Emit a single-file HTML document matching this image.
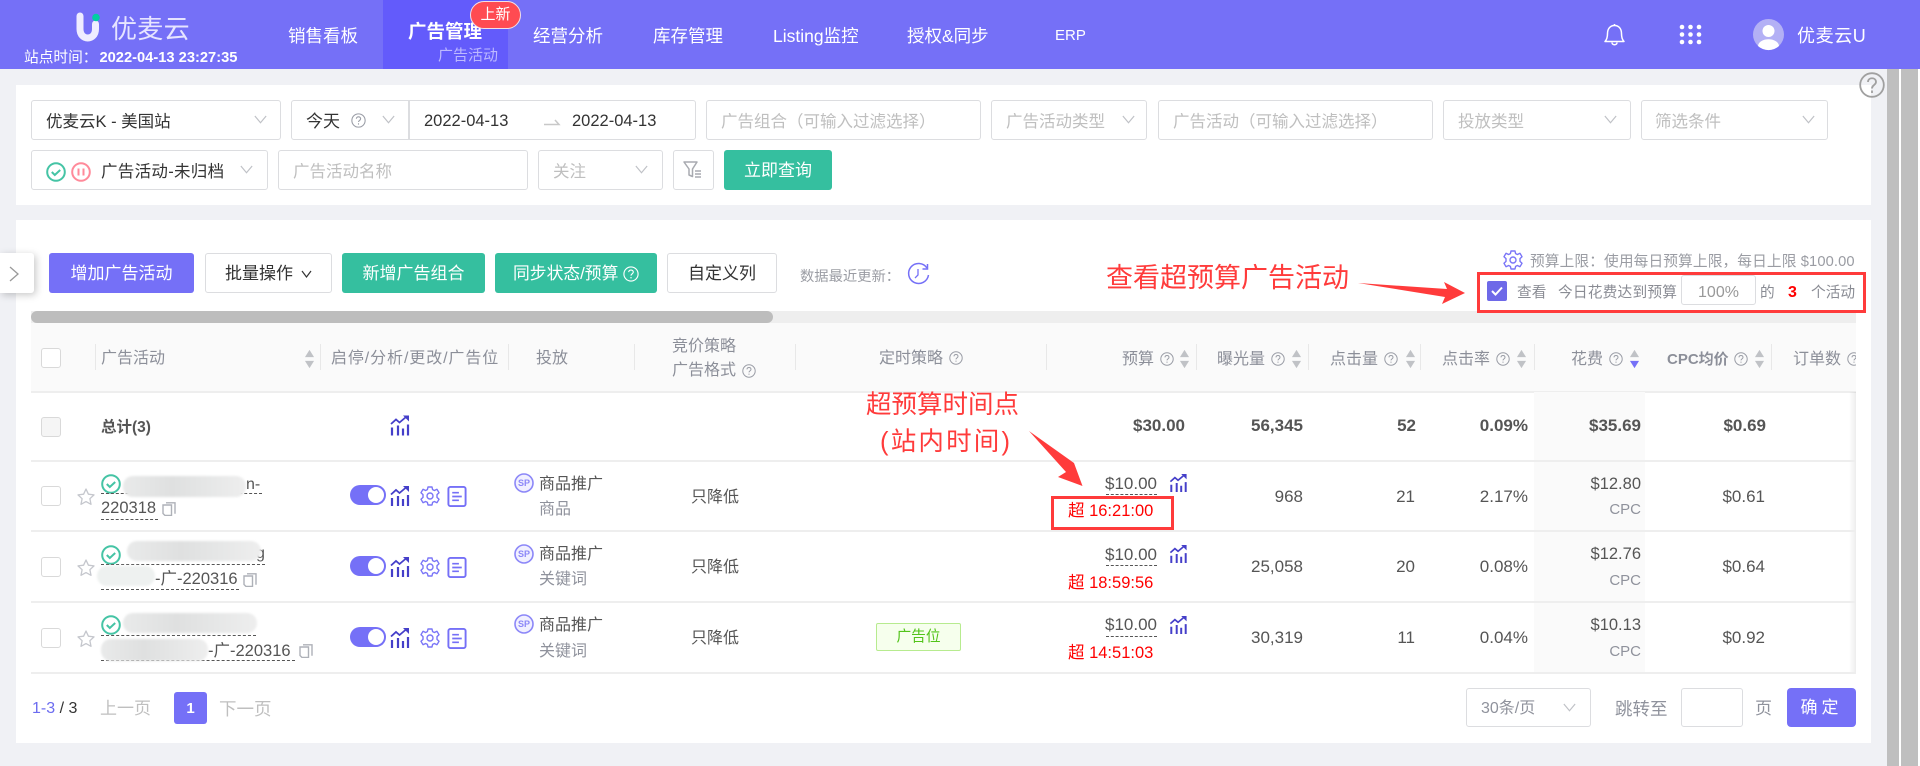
<!DOCTYPE html>
<html lang="zh-CN"><head><meta charset="utf-8"><title>优麦云 广告活动</title>
<style>
*{box-sizing:border-box}
html,body{margin:0;padding:0;width:1920px;height:766px;overflow:hidden;background:#f0f1f5}
body{position:relative;font-family:"Liberation Sans","Noto Sans CJK SC",sans-serif;font-size:17px;color:#333}
.a{position:absolute}
.t{position:absolute;white-space:nowrap;height:24px;line-height:24px}
.t:not(.r){margin-top:1px}
.t.g{margin-top:1px}
.r{text-align:right}
.g{color:#8f929c}
.ph{color:#bfbfbf}
.box{position:absolute;background:#fff;border:1.5px solid #dcdde0;border-radius:3px}
.btn{position:absolute;top:253px;height:40px;line-height:40px;text-align:center;border-radius:3px;font-size:17px}
.p{background:#7570f7;color:#fff}
.gr{background:#35bf9f;color:#fff}
.w{background:#fff;border:1.5px solid #dcdde0;color:#333}
.s{font-size:14.7px}
.hd{font-size:16px;color:#8c8f99}
.b{font-weight:700;color:#555}
.red{color:#f00}
.ln{position:absolute;left:31px;width:1825px;height:1.5px;background:#eeeeee}
.dv{position:absolute;top:344px;height:26px;width:1px;background:#e8e8e8}
.cb{position:absolute;left:41px;width:20px;height:20px;border:1.5px solid #d9d9d9;border-radius:3px;background:#fff}
.dash{position:absolute;border-top:1.5px dashed #555;height:0}
.blob{position:absolute;background:linear-gradient(90deg,#e9eaea,#dfe0e0 40%,#e6e7e7 70%,#eeeeee);border-radius:10px;filter:blur(1px)}
svg{position:absolute;overflow:visible}
</style></head><body>
<svg width="0" height="0" style="position:absolute">
<defs>
<symbol id="chart" viewBox="0 0 20 20"><g fill="none" stroke="#453fc9" stroke-width="1.8"><path d="M1 8.5 6 4l3.5 3L16 1.5"/></g><path d="M13 0h6v6z" fill="#453fc9"/><path d="M2 12v8M8 10v10M13 13v7M18 9v11" stroke="#453fc9" stroke-width="2.2" fill="none"/></symbol>
<symbol id="gear" viewBox="0 0 20 20"><path d="M8 1h4l.6 2.6 1.8.9L17 3.3l2 3.4-2 1.9v2.8l2 1.9-2 3.4-2.6-1.2-1.8.9L12 19H8l-.6-2.6-1.8-.9L3 16.7l-2-3.4 2-1.9V8.6L1 6.7l2-3.4 2.6 1.2 1.8-.9z" fill="none" stroke="#7a75f7" stroke-width="1.4" stroke-linejoin="round"/><circle cx="10" cy="10" r="3" fill="none" stroke="#7a75f7" stroke-width="1.4"/></symbol>
<symbol id="doc" viewBox="0 0 20 22"><rect x="1" y="1" width="18" height="20" rx="2" fill="none" stroke="#7570f7" stroke-width="2"/><path d="M5 7h7M5 11h10M5 15h7" stroke="#7570f7" stroke-width="1.8"/></symbol>
<symbol id="copy" viewBox="0 0 14 14"><path d="M4 .8h9v11" fill="none" stroke="#aeb1b8" stroke-width="1.4"/><path d="M1 3h8.5v10.5H3L1 11.5z" fill="#fff" stroke="#aeb1b8" stroke-width="1.4"/></symbol>
<symbol id="star" viewBox="0 0 18 17"><path d="M9 1l2.4 5.2 5.6.7-4.1 3.8 1.1 5.6L9 13.6l-5 2.7 1.1-5.6L1 6.9l5.6-.7z" fill="none" stroke="#c5c7cd" stroke-width="1.3" stroke-linejoin="round"/></symbol>
<symbol id="ok" viewBox="0 0 20 20"><circle cx="10" cy="10" r="8.8" fill="none" stroke="#45c4a5" stroke-width="2"/><path d="M5.8 10l3 3 5.4-5" fill="none" stroke="#45c4a5" stroke-width="2"/></symbol>
<symbol id="q" viewBox="0 0 14 14"><circle cx="7" cy="7" r="6.2" fill="none" stroke="#9a9da6" stroke-width="1"/><path d="M5 5.4c0-2.5 4-2.5 4 0 0 1.5-2 1.5-2 3M7 9.6v1.2" fill="none" stroke="#9a9da6" stroke-width="1"/></symbol>
<symbol id="chev" viewBox="0 0 12 8"><path d="M.8.8 6 7 11.2.8" fill="none" stroke="#bfc1c6" stroke-width="1.1"/></symbol>
<symbol id="sort" viewBox="0 0 11 22"><path d="M5.5 1 10.5 9H.5z" fill="#c0c2c6"/><path d="M5.5 21 .5 13h10z" fill="#c0c2c6"/></symbol>
<symbol id="sortd" viewBox="0 0 11 22"><path d="M5.5 1 10.5 9H.5z" fill="#c0c2c6"/><path d="M5.5 21 .5 13h10z" fill="#7570f7"/></symbol>
<symbol id="sp" viewBox="0 0 20 20"><circle cx="10" cy="10" r="9" fill="#f1f0ff" stroke="#8c87f8" stroke-width="1.6"/><text x="10" y="13" text-anchor="middle" font-size="9" font-weight="700" fill="#8c87f8" font-family="Liberation Sans">SP</text></symbol>
<symbol id="tg" viewBox="0 0 36 20"><rect width="36" height="20" rx="10" fill="#7570f7"/><circle cx="26" cy="10" r="8" fill="#fff"/></symbol>
</defs></svg>

<!-- header -->
<div class="a" style="left:0;top:0;width:1920px;height:69px;background:#7570f7"></div>
<div class="a" style="left:383px;top:0;width:125px;height:69px;background:#635bfb"></div>
<svg style="left:76px;top:14px" width="24" height="28" viewBox="0 0 24 28"><path d="M4 2v13c0 12 15.500 12 15.500 0V10" fill="none" stroke="#efedff" stroke-width="7" stroke-linecap="round"/><circle cx="20" cy="3.500" r="3.800" fill="#00cfa2"/></svg>
<div class="t" style="left:111px;top:16px;font-size:26px;color:#e6e4ff;line-height:24px;letter-spacing:.3px">优麦云</div>
<div class="t" style="left:24px;top:45px;font-size:14.7px;color:#fff">站点时间：<span style="font-weight:700;font-size:14.7px;margin-left:2px">2022-04-13 23:27:35</span></div>
<div class="t" style="left:288px;top:23px;color:#fff;font-size:17.5px">销售看板</div>
<div class="t" style="left:408px;top:19px;color:#fff;font-size:18.500px;font-weight:700">广告管理</div>
<div class="t" style="left:438px;top:43px;color:#bdb9ff;font-size:15px">广告活动</div>
<div class="a" style="left:470px;top:1px;width:51px;height:28px;border-radius:14px;background:#ff4b52;border:1px solid #f3dfe6;color:#fff;font-size:15px;line-height:25px;text-align:center">上新</div>
<div class="t" style="left:533px;top:23px;color:#fff;font-size:17.5px">经营分析</div>
<div class="t" style="left:653px;top:23px;color:#fff;font-size:17.5px">库存管理</div>
<div class="t" style="left:773px;top:23px;color:#fff;font-size:17.5px">Listing监控</div>
<div class="t" style="left:907px;top:23px;color:#fff;font-size:17.5px">授权&amp;同步</div>
<div class="t" style="left:1055px;top:23px;color:#fff;font-size:15px">ERP</div>
<svg style="left:1603px;top:23px" width="23" height="23" viewBox="0 0 23 23"><path d="M2 18.500c2-2 2.500-4 2.500-8C4.500 6 7 2.500 11.500 2.500S18.500 6 18.500 10.500c0 4 .5 6 2.500 8z" fill="none" stroke="#fff" stroke-width="1.500" stroke-linejoin="round"/><path d="M9 19.500c0 3 5 3 5 0M11.500 1v1.500" fill="none" stroke="#fff" stroke-width="1.500"/></svg>
<svg style="left:1679px;top:24px" width="23" height="21" fill="#fff"><circle cx="3" cy="3" r="2.300"/><circle cx="11.500" cy="3" r="2.300"/><circle cx="20" cy="3" r="2.300"/><circle cx="3" cy="10.500" r="2.300"/><circle cx="11.500" cy="10.500" r="2.300"/><circle cx="20" cy="10.500" r="2.300"/><circle cx="3" cy="18" r="2.300"/><circle cx="11.500" cy="18" r="2.300"/><circle cx="20" cy="18" r="2.300"/></svg>
<svg style="left:1753px;top:19px" width="31" height="31"><circle cx="15.500" cy="15.500" r="15.500" fill="#b3b0f5"/><circle cx="15.500" cy="12" r="6" fill="#fff"/><path d="M5 27c1-9 20-9 21 0a15.500 15.500 0 0 1-21 0z" fill="#fff"/></svg>
<div class="t" style="left:1797px;top:23px;color:#fff;font-size:18px;letter-spacing:.6px">优麦云U</div>

<!-- page scrollbars -->
<div class="a" style="left:1887px;top:69px;width:33px;height:697px;background:#fff"></div>
<div class="a" style="left:1887px;top:69px;width:12px;height:697px;background:#bfbfbf"></div>
<div class="a" style="left:1901px;top:69px;width:17px;height:697px;background:#bfbfbf"></div>

<!-- filter card -->
<div class="a" style="left:16px;top:85px;width:1855px;height:120px;background:#fff"></div>
<svg style="left:1859px;top:72px" width="26" height="26" viewBox="0 0 26 26"><circle cx="13" cy="13" r="11.800" fill="none" stroke="#a0a0a0" stroke-width="1.800"/><path d="M9 10c0-5 8-5 8 0 0 3-4 3-4 6.500M13 18.500v2.500" fill="none" stroke="#a0a0a0" stroke-width="1.800"/></svg>

<div class="box" style="left:31px;top:100px;width:250px;height:40px"></div>
<div class="t" style="left:46px;top:109px;font-size:16.500px">优麦云K - 美国站</div>
<svg style="left:254px;top:115px" width="13" height="9"><use href="#chev"/></svg>
<div class="box" style="left:291px;top:100px;width:405px;height:40px"></div>
<div class="a" style="left:408px;top:100px;width:1.500px;height:40px;background:#dcdde0"></div>
<div class="t" style="left:306px;top:109px;font-size:17px">今天</div>
<svg style="left:351px;top:113px" width="15" height="15"><use href="#q"/></svg>
<svg style="left:382px;top:115px" width="13" height="9"><use href="#chev"/></svg>
<div class="t" style="left:424px;top:108px;font-size:16.500px">2022-04-13</div>
<div class="t" style="left:572px;top:108px;font-size:16.500px">2022-04-13</div>
<svg style="left:544px;top:118px" width="16" height="8"><path d="M0 6.500h15L11 2" fill="none" stroke="#c8c8c8" stroke-width="1.500"/></svg>
<div class="box" style="left:706px;top:100px;width:275px;height:40px"></div>
<div class="t ph" style="left:721px;top:109px;font-size:16.500px">广告组合（可输入过滤选择）</div>
<div class="box" style="left:991px;top:100px;width:156px;height:40px"></div>
<div class="t ph" style="left:1006px;top:109px;font-size:16.500px">广告活动类型</div>
<svg style="left:1122px;top:115px" width="13" height="9"><use href="#chev"/></svg>
<div class="box" style="left:1158px;top:100px;width:275px;height:40px"></div>
<div class="t ph" style="left:1173px;top:109px;font-size:16.500px">广告活动（可输入过滤选择）</div>
<div class="box" style="left:1443px;top:100px;width:188px;height:40px"></div>
<div class="t ph" style="left:1458px;top:109px;font-size:16.500px">投放类型</div>
<svg style="left:1604px;top:115px" width="13" height="9"><use href="#chev"/></svg>
<div class="box" style="left:1641px;top:100px;width:187px;height:40px"></div>
<div class="t ph" style="left:1655px;top:109px;font-size:16.500px">筛选条件</div>
<svg style="left:1802px;top:115px" width="13" height="9"><use href="#chev"/></svg>

<div class="box" style="left:31px;top:150px;width:237px;height:40px"></div>
<svg style="left:46px;top:162px" width="20" height="20"><use href="#ok"/></svg>
<svg style="left:71px;top:162px" width="20" height="20" viewBox="0 0 20 20"><circle cx="10" cy="10" r="8.800" fill="none" stroke="#ff8a9a" stroke-width="2"/><path d="M7.500 6.500v7M12.500 6.500v7" stroke="#ff8a9a" stroke-width="2"/></svg>
<div class="t" style="left:101px;top:159px;font-size:16.500px;letter-spacing:.3px">广告活动-未归档</div>
<svg style="left:240px;top:165px" width="13" height="9"><use href="#chev"/></svg>
<div class="box" style="left:278px;top:150px;width:250px;height:40px"></div>
<div class="t ph" style="left:293px;top:159px;font-size:16.500px">广告活动名称</div>
<div class="box" style="left:538px;top:150px;width:125px;height:40px"></div>
<div class="t ph" style="left:553px;top:159px;font-size:16.500px">关注</div>
<svg style="left:635px;top:165px" width="13" height="9"><use href="#chev"/></svg>
<div class="box" style="left:673px;top:150px;width:41px;height:40px"></div>
<svg style="left:683px;top:161px" width="21" height="18" viewBox="0 0 21 18"><path d="M1 1h13L9.500 8v7.500L6 14V8z" fill="none" stroke="#a8aab0" stroke-width="1.500" stroke-linejoin="round"/><path d="M12 10h6M12 13h6M12 16h6" stroke="#a8aab0" stroke-width="1.500"/></svg>
<div class="btn gr" style="left:724px;top:150px;width:108px;line-height:42px">立即查询</div>

<!-- table card -->
<div class="a" style="left:16px;top:220px;width:1855px;height:523px;background:#fff"></div>
<div class="a" style="left:0;top:253px;width:34px;height:40px;background:#fff;border-radius:0 3px 3px 0;box-shadow:2px 2px 8px rgba(0,0,0,.22)"></div>
<svg style="left:9px;top:266px" width="11" height="16"><path d="M1 1l8 7-8 7" fill="none" stroke="#999" stroke-width="1.300"/></svg>
<div class="btn p" style="left:49px;width:145px;line-height:42px">增加广告活动</div>
<div class="btn w" style="left:205px;width:127px;text-align:left;padding-left:19px">批量操作<svg style="left:95px;top:16px" width="11" height="8"><path d="M1 1l4.500 6L10 1" fill="none" stroke="#333" stroke-width="1.200"/></svg></div>
<div class="btn gr" style="left:342px;width:143px;line-height:42px">新增广告组合</div>
<div class="btn gr" style="left:495px;width:162px;line-height:42px;font-size:16.800px;text-align:left;padding-left:18px">同步状态/预算<svg style="left:128px;top:13px" width="16" height="16" viewBox="0 0 14 14"><circle cx="7" cy="7" r="6.200" fill="none" stroke="#fff" stroke-width="1"/><path d="M5 5.400c0-2.500 4-2.500 4 0 0 1.500-2 1.500-2 3M7 9.600v1.200" fill="none" stroke="#fff" stroke-width="1"/></svg></div>
<div class="btn w" style="left:667px;width:110px">自定义列</div>
<div class="t" style="left:800px;top:264px;font-size:14.300px;color:#9a9ca3">数据最近更新：</div>
<svg style="left:907px;top:263px" width="23" height="22" viewBox="0 0 23 22"><path d="M20 5A10 10 0 1 0 21.500 12" fill="none" stroke="#7570f7" stroke-width="1.500"/><path d="M20.500 1v5h-5" fill="none" stroke="#7570f7" stroke-width="1.500"/><path d="M11 6v6l-3 3" fill="none" stroke="#7570f7" stroke-width="1.300"/></svg>

<div class="a" style="left:31px;top:311px;width:1825px;height:12px;background:#eeeeee"></div>
<div class="a" style="left:31px;top:311px;width:742px;height:12px;background:#bdbdbd;border-radius:6px"></div>

<!-- table head -->
<div class="a" style="left:31px;top:323px;width:1825px;height:68px;background:#fafafa"></div>
<div class="ln" style="top:391px"></div>
<div class="a" style="left:1534px;top:392px;width:111px;height:280px;background:#fafafa"></div>
<div class="a" style="left:1849px;top:392px;width:7px;height:280px;background:linear-gradient(90deg,rgba(0,0,0,0),rgba(0,0,0,.07))"></div>
<div class="cb" style="top:348px"></div>
<div class="dv" style="left:95px"></div><div class="dv" style="left:320px"></div><div class="dv" style="left:508px"></div><div class="dv" style="left:634px"></div><div class="dv" style="left:795px"></div><div class="dv" style="left:1046px"></div><div class="dv" style="left:1196px"></div><div class="dv" style="left:1308px"></div><div class="dv" style="left:1420px"></div><div class="dv" style="left:1534px"></div><div class="dv" style="left:1771px"></div>
<div class="t hd" style="left:101px;top:346px">广告活动</div>
<svg style="left:304px;top:349px" width="11" height="20"><use href="#sort"/></svg>
<div class="t hd" style="left:331px;top:346px;font-size:16px;letter-spacing:.9px">启停/分析/更改/广告位</div>
<div class="t hd" style="left:536px;top:346px">投放</div>
<div class="t hd" style="left:672px;top:334px">竞价策略</div>
<div class="t hd" style="left:672px;top:358px">广告格式</div>
<svg style="left:742px;top:364px" width="14" height="14"><use href="#q"/></svg>
<div class="t hd" style="left:879px;top:346px">定时策略</div>
<svg style="left:949px;top:351px" width="14" height="14"><use href="#q"/></svg>
<div class="t hd" style="left:1122px;top:347px">预算</div><svg style="left:1160px;top:352px" width="14" height="14"><use href="#q"/></svg><svg style="left:1179px;top:349px" width="11" height="20"><use href="#sort"/></svg>
<div class="t hd" style="left:1217px;top:347px">曝光量</div><svg style="left:1271px;top:352px" width="14" height="14"><use href="#q"/></svg><svg style="left:1291px;top:349px" width="11" height="20"><use href="#sort"/></svg>
<div class="t hd" style="left:1330px;top:347px">点击量</div><svg style="left:1384px;top:352px" width="14" height="14"><use href="#q"/></svg><svg style="left:1405px;top:349px" width="11" height="20"><use href="#sort"/></svg>
<div class="t hd" style="left:1442px;top:347px">点击率</div><svg style="left:1496px;top:352px" width="14" height="14"><use href="#q"/></svg><svg style="left:1516px;top:349px" width="11" height="20"><use href="#sort"/></svg>
<div class="t hd" style="left:1571px;top:347px">花费</div><svg style="left:1609px;top:352px" width="14" height="14"><use href="#q"/></svg><svg style="left:1629px;top:349px" width="11" height="20"><use href="#sortd"/></svg>
<div class="t hd" style="left:1667px;top:347px;font-weight:700;font-size:15px">CPC均价</div><svg style="left:1734px;top:352px" width="14" height="14"><use href="#q"/></svg><svg style="left:1754px;top:349px" width="11" height="20"><use href="#sort"/></svg>
<div class="t hd" style="left:1793px;top:347px">订单数</div>
<div class="a" style="left:1847px;top:352px;width:9px;height:14px;overflow:hidden"><svg style="left:0;top:0" width="14" height="14"><use href="#q"/></svg></div>

<!-- total row -->
<div class="cb" style="top:417px;background:#f5f5f5"></div>
<div class="t b" style="left:101px;top:415px;font-size:15.500px">总计(3)</div>
<svg style="left:390px;top:415px" width="20" height="21"><use href="#chart"/></svg>
<div class="t b r" style="right:735px;top:414px">$30.00</div>
<div class="t b r" style="right:617px;top:414px">56,345</div>
<div class="t b r" style="right:504px;top:414px">52</div>
<div class="t b r" style="right:392px;top:414px">0.09%</div>
<div class="t b r" style="right:279px;top:414px">$35.69</div>
<div class="t b r" style="right:154px;top:414px">$0.69</div>
<div class="ln" style="top:460px"></div>
<div class="ln" style="top:530px"></div>
<div class="ln" style="top:601px"></div>
<div class="ln" style="top:672px"></div>

<!-- row 1 -->
<div class="cb" style="top:486px"></div>
<svg style="left:77px;top:488px" width="18" height="17"><use href="#star"/></svg>
<svg style="left:101px;top:474px" width="20" height="20"><use href="#ok"/></svg>
<div class="t" style="left:246px;top:472px;color:#555;font-size:16px">n-</div>
<div class="dash" style="left:101px;top:493px;width:161px"></div>
<div class="blob" style="left:123px;top:476px;width:123px;height:21px"></div>
<div class="t" style="left:101px;top:495px;color:#555;font-size:16.500px">220318</div>
<div class="dash" style="left:101px;top:519px;width:57px"></div>
<svg style="left:162px;top:502px" width="14" height="14"><use href="#copy"/></svg>
<svg style="left:350px;top:485px" width="36" height="20"><use href="#tg"/></svg>
<svg style="left:390px;top:486px" width="20" height="20"><use href="#chart"/></svg>
<svg style="left:420px;top:486px" width="20" height="20"><use href="#gear"/></svg>
<svg style="left:447px;top:486px" width="20" height="21"><use href="#doc"/></svg>
<svg style="left:514px;top:473px" width="20" height="20"><use href="#sp"/></svg>
<div class="t" style="left:539px;top:472px;color:#555;font-size:16px">商品推广</div>
<div class="t g" style="left:539px;top:497px;font-size:16px">商品</div>
<div class="t" style="left:691px;top:485px;color:#555;font-size:16px">只降低</div>
<div class="t r" style="right:763px;top:472px;color:#555">$10.00</div>
<div class="dash" style="left:1106px;top:494px;width:51px"></div>
<svg style="left:1169px;top:474px" width="19" height="18"><use href="#chart"/></svg>
<div class="t red" style="left:1068px;top:498px;font-size:16.500px">超 16:21:00</div>
<div class="t r" style="right:617px;top:485px;color:#555">968</div>
<div class="t r" style="right:505px;top:485px;color:#555">21</div>
<div class="t r" style="right:392px;top:485px;color:#555">2.17%</div>
<div class="t r" style="right:279px;top:472px;color:#555;font-size:16.500px">$12.80</div>
<div class="t r g" style="right:279px;top:497px;font-size:15px">CPC</div>
<div class="t r" style="right:155px;top:485px;color:#555">$0.61</div>

<!-- row 2 -->
<div class="cb" style="top:557px"></div>
<svg style="left:77px;top:559px" width="18" height="17"><use href="#star"/></svg>
<svg style="left:101px;top:545px" width="20" height="20"><use href="#ok"/></svg>
<div class="dash" style="left:101px;top:564px;width:164px"></div>
<div class="t" style="left:256px;top:541px;color:#555;font-size:16px">g</div>
<div class="blob" style="left:127px;top:541px;width:134px;height:20px"></div>
<div class="t" style="left:155px;top:566px;color:#555;font-size:16.500px">-广-220316</div>
<div class="blob" style="left:97px;top:566px;width:58px;height:20px;background:#eef1f0"></div>
<div class="dash" style="left:101px;top:589px;width:138px"></div>
<svg style="left:243px;top:573px" width="14" height="14"><use href="#copy"/></svg>
<svg style="left:350px;top:556px" width="36" height="20"><use href="#tg"/></svg>
<svg style="left:390px;top:557px" width="20" height="20"><use href="#chart"/></svg>
<svg style="left:420px;top:557px" width="20" height="20"><use href="#gear"/></svg>
<svg style="left:447px;top:557px" width="20" height="21"><use href="#doc"/></svg>
<svg style="left:514px;top:544px" width="20" height="20"><use href="#sp"/></svg>
<div class="t" style="left:539px;top:542px;color:#555;font-size:16px">商品推广</div>
<div class="t g" style="left:539px;top:567px;font-size:16px">关键词</div>
<div class="t" style="left:691px;top:555px;color:#555;font-size:16px">只降低</div>
<div class="t r" style="right:763px;top:543px;color:#555">$10.00</div>
<div class="dash" style="left:1106px;top:565px;width:51px"></div>
<svg style="left:1169px;top:545px" width="19" height="18"><use href="#chart"/></svg>
<div class="t red" style="left:1068px;top:570px;font-size:16.500px">超 18:59:56</div>
<div class="t r" style="right:617px;top:555px;color:#555">25,058</div>
<div class="t r" style="right:505px;top:555px;color:#555">20</div>
<div class="t r" style="right:392px;top:555px;color:#555">0.08%</div>
<div class="t r" style="right:279px;top:542px;color:#555;font-size:16.500px">$12.76</div>
<div class="t r g" style="right:279px;top:568px;font-size:15px">CPC</div>
<div class="t r" style="right:155px;top:555px;color:#555">$0.64</div>

<!-- row 3 -->
<div class="cb" style="top:628px"></div>
<svg style="left:77px;top:630px" width="18" height="17"><use href="#star"/></svg>
<svg style="left:101px;top:615px" width="20" height="20"><use href="#ok"/></svg>
<div class="dash" style="left:101px;top:635px;width:155px"></div>
<div class="blob" style="left:123px;top:613px;width:134px;height:20px"></div>
<div class="t" style="left:208px;top:638px;color:#555;font-size:16.500px">-广-220316</div>
<div class="dash" style="left:101px;top:660px;width:194px"></div>
<div class="blob" style="left:101px;top:639px;width:107px;height:22px"></div>
<svg style="left:299px;top:644px" width="14" height="14"><use href="#copy"/></svg>
<svg style="left:350px;top:627px" width="36" height="20"><use href="#tg"/></svg>
<svg style="left:390px;top:628px" width="20" height="20"><use href="#chart"/></svg>
<svg style="left:420px;top:628px" width="20" height="20"><use href="#gear"/></svg>
<svg style="left:447px;top:628px" width="20" height="21"><use href="#doc"/></svg>
<svg style="left:514px;top:614px" width="20" height="20"><use href="#sp"/></svg>
<div class="t" style="left:539px;top:613px;color:#555;font-size:16px">商品推广</div>
<div class="t g" style="left:539px;top:639px;font-size:16px">关键词</div>
<div class="t" style="left:691px;top:626px;color:#555;font-size:16px">只降低</div>
<div class="a" style="left:876px;top:623px;width:85px;height:28px;background:#f6ffed;border:1px solid #b7eb8f;border-radius:2px;color:#52c41a;font-size:14.700px;line-height:26px;text-align:center">广告位</div>
<div class="t r" style="right:763px;top:613px;color:#555">$10.00</div>
<div class="dash" style="left:1106px;top:636px;width:51px"></div>
<svg style="left:1169px;top:616px" width="19" height="18"><use href="#chart"/></svg>
<div class="t red" style="left:1068px;top:640px;font-size:16.500px">超 14:51:03</div>
<div class="t r" style="right:617px;top:626px;color:#555">30,319</div>
<div class="t r" style="right:505px;top:626px;color:#555">11</div>
<div class="t r" style="right:392px;top:626px;color:#555">0.04%</div>
<div class="t r" style="right:279px;top:613px;color:#555;font-size:16.500px">$10.13</div>
<div class="t r g" style="right:279px;top:639px;font-size:15px">CPC</div>
<div class="t r" style="right:155px;top:626px;color:#555">$0.92</div>

<!-- pagination -->
<div class="t" style="left:32px;top:696px;font-size:16px"><span style="color:#6c6cf0">1-3</span> / 3</div>
<div class="t ph" style="left:100px;top:696px;font-size:17px">上一页</div>
<div class="a" style="left:174px;top:692px;width:33px;height:32px;background:#7570f7;border-radius:3px;color:#fff;font-weight:700;font-size:15px;line-height:33px;text-align:center">1</div>
<div class="t ph" style="left:219px;top:696px;font-size:17.500px">下一页</div>
<div class="box" style="left:1466px;top:688px;width:125px;height:39px"></div>
<div class="t g" style="left:1481px;top:696px;font-size:16px">30条/页</div>
<svg style="left:1563px;top:703px" width="13" height="9"><use href="#chev"/></svg>
<div class="t g" style="left:1615px;top:696px;font-size:17.500px">跳转至</div>
<div class="box" style="left:1681px;top:688px;width:62px;height:39px"></div>
<div class="t g" style="left:1755px;top:696px;font-size:17px">页</div>
<div class="a" style="left:1787px;top:688px;width:69px;height:39px;background:#7570f7;border-radius:4px;color:#fff;font-size:17px;line-height:40px;text-align:center;letter-spacing:4px">确定</div>

<!-- top-right settings -->
<svg style="left:1503px;top:250px" width="20" height="20"><use href="#gear"/></svg>
<div class="t s" style="left:1530px;top:249px;color:#9a9ca3;letter-spacing:.12px">预算上限：使用每日预算上限，每日上限 $100.00</div>
<div class="a" style="left:1487px;top:281px;width:20px;height:20px;background:#6e69e8;border-radius:2px"></div>
<svg style="left:1491px;top:286px" width="12" height="10"><path d="M1 5l3.500 3.500L11 1.500" fill="none" stroke="#fff" stroke-width="2"/></svg>
<div class="t s" style="left:1517px;top:280px;color:#8a8c94">查看</div>
<div class="t s" style="left:1558px;top:280px;color:#8a8c94;letter-spacing:.2px">今日花费达到预算</div>
<div class="box" style="left:1681px;top:275px;width:75px;height:30px;color:#999;font-size:16px;line-height:34px;text-align:center">100%</div>
<div class="t s" style="left:1760px;top:280px;color:#8a8c94">的</div>
<div class="t" style="left:1788px;top:280px;color:#f00;font-weight:700;font-size:16px">3</div>
<div class="t s" style="left:1811px;top:280px;color:#8a8c94">个活动</div>

<!-- annotations -->
<div class="a" style="left:1477px;top:272px;width:389px;height:41px;border:3px solid #ff3b3b"></div>
<div class="t" style="left:1106px;top:261px;font-size:27px;line-height:32px;height:32px;color:#ff3b3b">查看超预算广告活动</div>
<svg style="left:0;top:0" width="1920" height="766"><path d="M1358 283 1447 289 1444 282 1465 293 1442 304 1445 297z" fill="#ff3b3b"/><path d="M1029 431 1074 463 1074 463 1082.500 486 1058 477 1066 472z" fill="#ff3b3b"/></svg>
<div class="t" style="left:866px;top:388px;font-size:25.500px;line-height:32px;height:32px;color:#ff3b3b">超预算时间点</div>
<div class="t" style="left:880px;top:425px;font-size:25.500px;line-height:32px;height:32px;color:#ff3b3b;letter-spacing:2.200px">(站内时间)</div>
<div class="a" style="left:1051px;top:496px;width:123px;height:34px;border:3px solid #ff3b3b"></div>
</body></html>
